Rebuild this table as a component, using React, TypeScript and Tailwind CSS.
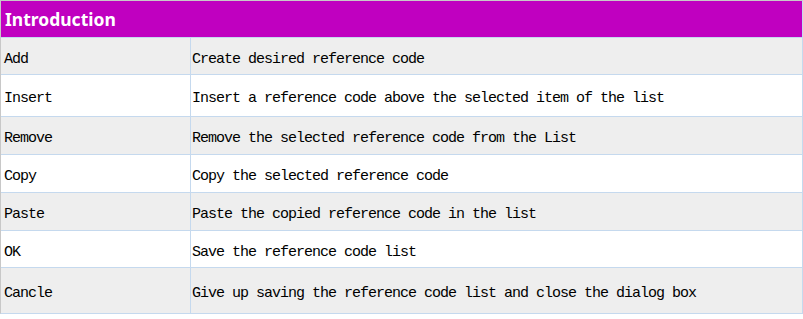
import React from 'react';

const rows = [
  { name: 'Add', desc: 'Create desired reference code', h: 'h-[37px]', bg: 'bg-[#eeeeee]' },
  { name: 'Insert', desc: 'Insert a reference code above the selected item of the list', h: 'h-[42px]', bg: 'bg-white' },
  { name: 'Remove', desc: 'Remove the selected reference code from the List', h: 'h-[38px]', bg: 'bg-[#eeeeee]' },
  { name: 'Copy', desc: 'Copy the selected reference code', h: 'h-[38px]', bg: 'bg-white' },
  { name: 'Paste', desc: 'Paste the copied reference code in the list', h: 'h-[38px]', bg: 'bg-[#eeeeee]' },
  { name: 'OK', desc: 'Save the reference code list', h: 'h-[37px]', bg: 'bg-white' },
  { name: 'Cancle', desc: 'Give up saving the reference code list and close the dialog box', h: 'h-[45px]', bg: 'bg-[#eeeeee]' },
];

export default function App() {
  return (
    <div className="w-[803px] h-[319px] bg-white">
      <div className="border border-[#c5d9ee] border-t-[#c8c8c8] border-l-[#c8c8c8]">
        {/* header */}
        <div className="h-[37px] bg-[#c000c0] flex items-center px-[4px] pt-[2px] border-b border-[#c5d9ee]">
          <span className="text-white font-bold text-[17.5px] font-['Noto_Sans',sans-serif] leading-none">Introduction</span>
        </div>
        {rows.map((r, i) => (
          <div
            key={r.name}
            className={`flex ${r.h} ${r.bg} ${i < rows.length - 1 ? 'border-b border-[#c5d9ee]' : ''} font-['Liberation_Mono',monospace] text-[15px] tracking-[-1px] text-black`}
          >
            <div className="w-[190px] border-r border-[#c5d9ee] flex items-center pl-[3px] pt-[8px]">{r.name}</div>
            <div className="flex-1 flex items-center pl-[1px] pt-[8px]">{r.desc}</div>
          </div>
        ))}
      </div>
    </div>
  );
}
